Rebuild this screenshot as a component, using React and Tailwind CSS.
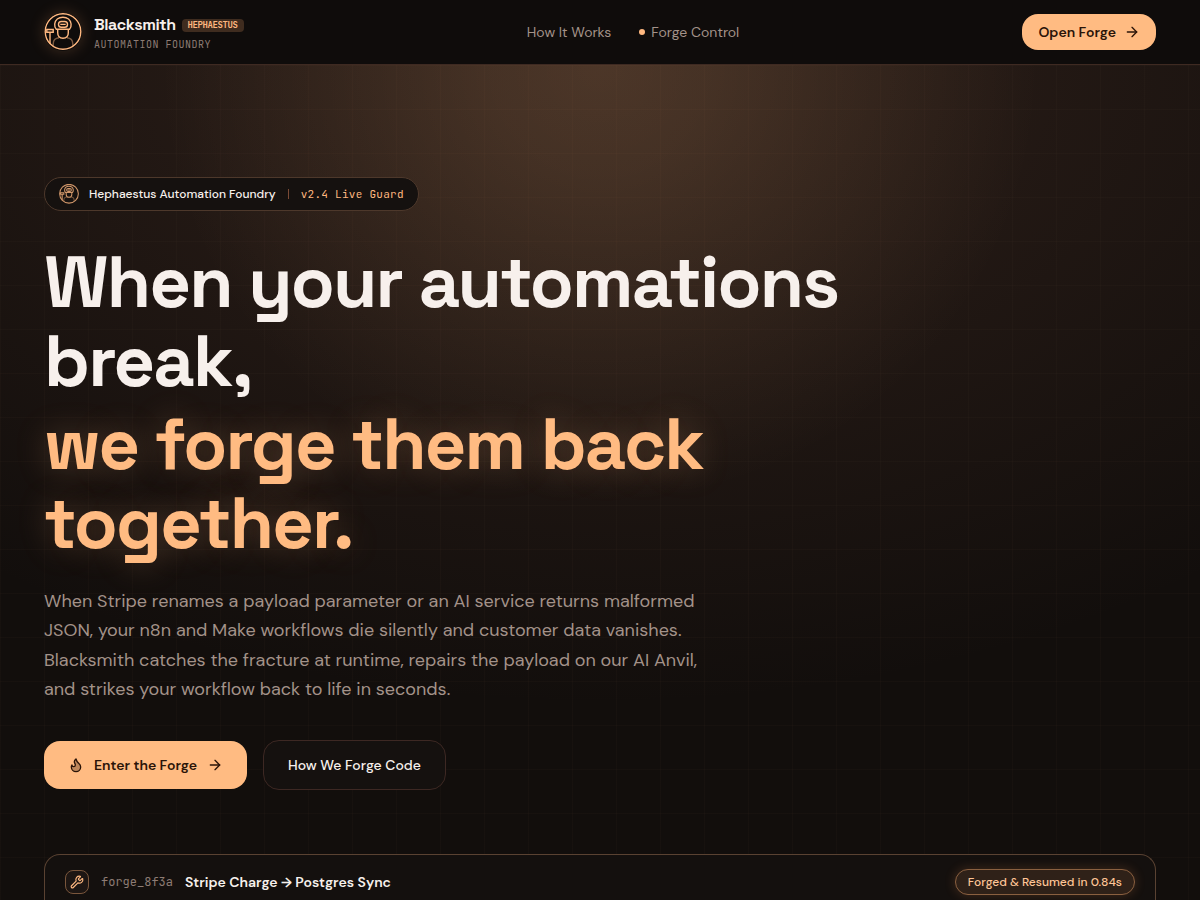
import React from 'react'
import { ArrowRight, Flame, Wrench } from 'lucide-react'

const SmithMark = ({ className, strokeWidth = 1.4 }) => (
  <svg viewBox="0 0 38 38" fill="none" stroke="#ffb880" strokeWidth={strokeWidth} className={className} aria-hidden="true">
    <circle cx="19" cy="18.5" r="17.8" />
    <path d="M12.300 16.300C10.800 14.500 10.500 12.800 10.700 11 11.200 7 14.500 4.300 18.900 4.300s7.700 2.700 8.200 6.700c.2 1.800-.1 3.500-1.600 5.300z" />
    <rect x="14.500" y="8.500" width="9" height="5.700" rx="2.800" />
    <path d="M16.300 11.400h5.400" />
    <path d="M13.700 16.300v3.500c0 3.300 2 5.400 5.300 5.400s5.300-2.100 5.300-5.400v-3.500" />
    <path d="M9.200 33V31c0-3.800 2.300-6 5.800-6.300M23 24.700c3.500.3 5.800 2.500 5.800 6.300v2" opacity="0.45" />
    <path d="M2.800 16.500h6.400v2.800H2.800zM6 19.300V31" />
  </svg>
)

const Header = () => (
  <header className="border-b border-[#3e2a22] bg-[#0f0c0b]">
    <div className="flex h-16 items-center justify-between px-11">
      <a href="#" className="flex items-center gap-3">
        <SmithMark className="size-[38px] rounded-full shadow-[0_0_16px_rgba(255,170,110,0.2)]" />
        <span className="flex flex-col gap-1 pt-0.5">
          <span className="flex items-center gap-1.5 tracking-tight">
            <span className="font-['Space_Grotesk','Inter',sans-serif] text-base leading-5 font-semibold text-[#f7f0ec]">Blacksmith</span>
            <span className="rounded bg-[#3f2c1f] px-1.5 font-['JetBrains_Mono','Liberation_Mono',monospace] text-[9px] leading-[13px] font-bold text-[#ffb880]">
              HEPHAESTUS
            </span>
          </span>
          <span className="font-['JetBrains_Mono','Liberation_Mono',monospace] text-[10px] leading-3 tracking-wider text-[#8d7c74]">
            AUTOMATION FOUNDRY
          </span>
        </span>
      </a>

      <nav className="flex items-center gap-7 text-sm text-[#a39289]">
        <a href="#how">How It Works</a>
        <a href="#control" className="flex items-center gap-1.5">
          <span className="size-1.5 rounded-full bg-[#ffb880]" />
          Forge Control
        </a>
      </nav>

      <button type="button" className="flex h-9 items-center gap-2 rounded-2xl bg-[#ffbb82] px-4 text-sm font-semibold text-[#2a1408]">
        Open Forge
        <ArrowRight size={16} />
      </button>
    </div>
  </header>
)

const Hero = () => (
  <section className="bg-[linear-gradient(rgba(255,184,128,0.018)_1px,transparent_1px),linear-gradient(90deg,rgba(255,184,128,0.018)_1px,transparent_1px),radial-gradient(ellipse_440px_440px_at_50%_0%,rgba(255,190,128,0.14),rgba(255,190,128,0.12)_25%,transparent),radial-gradient(ellipse_1000px_640px_at_50%_0%,rgba(140,90,70,0.24),transparent)] bg-[size:44px_44px,44px_44px,auto,auto] px-11 pt-28">
    <div className="flex h-[34px] w-fit items-center gap-2.5 rounded-full border border-[#4d382b] bg-[#15110f] px-3.5">
      <SmithMark className="size-5 opacity-80" strokeWidth={2} />
      <span className="text-xs font-medium text-[#f7f0ec]">Hephaestus Automation Foundry</span>
      <span className="mx-0.5 h-2.5 w-px bg-[#7a4a35]" />
      <span className="font-['JetBrains_Mono','Liberation_Mono',monospace] text-[11px] tracking-wide text-[#ffb880]">v2.4 Live Guard</span>
    </div>

    <h1 className="mt-8 max-w-[900px] font-['Space_Grotesk','Inter',sans-serif] text-[72px] leading-[79px] font-semibold tracking-tight text-[#f7f0ec]">
      When your automations break,
      <span className="mt-1 block max-w-[760px] text-[#ffbb82] [text-shadow:0_0_32px_rgba(255,184,128,0.25)]">
        we forge them back together.
      </span>
    </h1>

    <p className="mt-6 max-w-[680px] text-lg leading-relaxed text-[#a39289]">
      When Stripe renames a payload parameter or an AI service returns malformed JSON, your n8n and Make workflows
      die silently and customer data vanishes. Blacksmith catches the fracture at runtime, repairs the payload on our
      AI Anvil, and strikes your workflow back to life in seconds.
    </p>

    <div className="mt-9 flex items-center gap-4">
      <button type="button" className="flex h-12 items-center gap-2.5 rounded-2xl bg-[#ffbb82] px-6 text-sm font-semibold text-[#2a1408]">
        <Flame size={16} fill="rgba(42,20,8,0.3)" />
        Enter the Forge
        <ArrowRight size={16} />
      </button>
      <button type="button" className="h-[50px] rounded-2xl border border-[#3d2823] bg-[#15110f] px-6 text-sm font-medium text-[#f7f0ec]">
        How We Forge Code
      </button>
    </div>

    <ForgeCard />
  </section>
)

const ForgeCard = () => (
  <div className="mt-16 rounded-t-2xl border border-b-0 border-[#5a4232] bg-[#14100e]">
    <div className="flex items-center justify-between px-5 pt-3.5 pb-4">
      <div className="flex items-center gap-3">
        <span className="flex size-6 items-center justify-center rounded-lg border border-[#7a563c] bg-[#1d1613] text-[#ffb880]">
          <Wrench size={14} />
        </span>
        <span className="font-['JetBrains_Mono','Liberation_Mono',monospace] text-xs text-[#8d7c74]">forge_8f3a</span>
        <span className="text-sm font-semibold text-[#f7f0ec]">Stripe Charge → Postgres Sync</span>
      </div>
      <span className="rounded-full border border-[#8a6040] bg-[#2f2118] px-3 text-xs leading-6 font-medium text-[#ffc596] shadow-[0_0_12px_rgba(255,150,80,0.2)]">
        Forged &amp; Resumed in 0.84s
      </span>
    </div>
  </div>
)

const App = () => {
  return (
    <div className="min-h-screen bg-[#120e0c] font-['DM_Sans','Inter',sans-serif]">
      <Header />
      <Hero />
    </div>
  )
}

export default App
